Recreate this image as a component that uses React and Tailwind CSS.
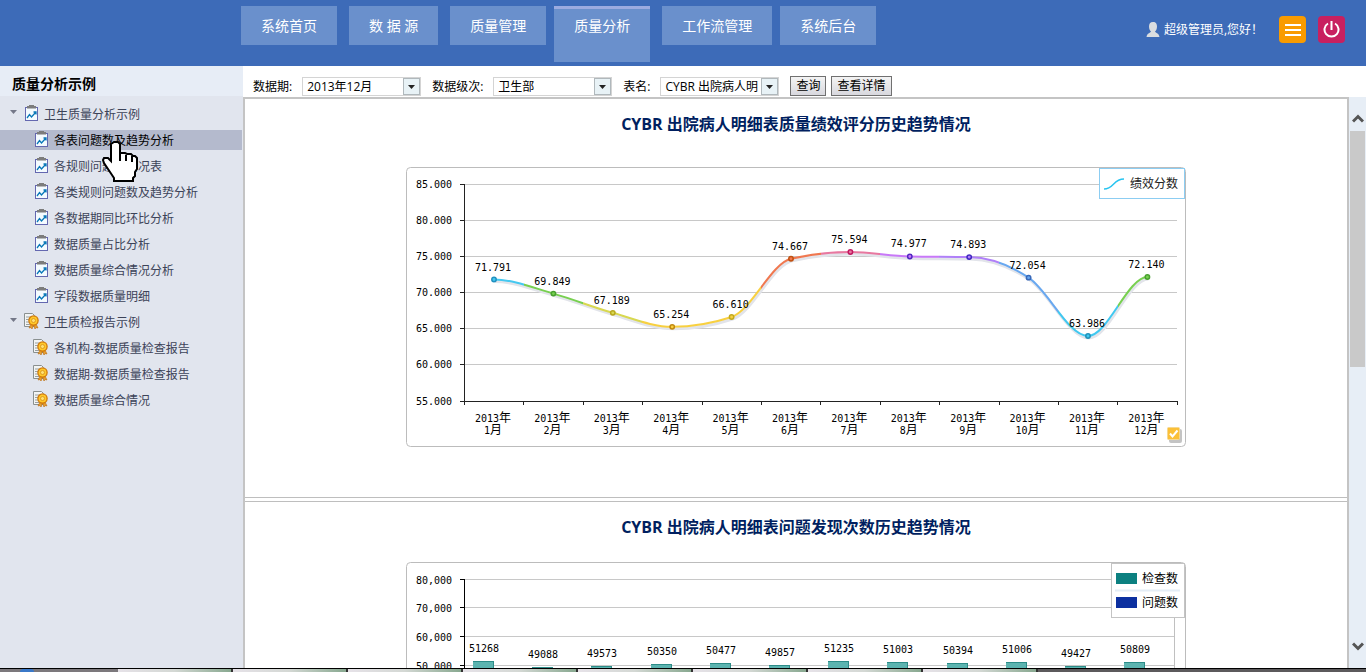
import React, { useState } from 'react';

const navItems = [
  { name: '系统首页', gap: 'mr-3' },
  { name: '数 据 源', gap: 'mr-3' },
  { name: '质量管理', gap: 'mr-2' },
  { name: '质量分析', gap: 'mr-3' },
  { name: '工作流管理', gap: 'mr-2' },
  { name: '系统后台', gap: '' },
];

const tree = [
  {
    name: '卫生质量分析示例',
    type: 'chart',
    children: [
      '各表问题数及趋势分析',
      '各规则问题数情况表',
      '各类规则问题数及趋势分析',
      '各数据期同比环比分析',
      '数据质量占比分析',
      '数据质量综合情况分析',
      '字段数据质量明细',
    ],
  },
  {
    name: '卫生质检报告示例',
    type: 'report',
    children: ['各机构-数据质量检查报告', '数据期-数据质量检查报告', '数据质量综合情况'],
  },
];

const scores = [
  { value: 71.791, line: '#45c8f0', dot: '#2090c0' },
  { value: 69.849, line: '#78d050', dot: '#48a030' },
  { value: 67.189, line: '#d8d850', dot: '#b8a820' },
  { value: 65.254, line: '#f8d040', dot: '#c08810' },
  { value: 66.61, line: '#f8d040', dot: '#c0a820' },
  { value: 74.667, line: '#f07850', dot: '#c05010' },
  { value: 75.594, line: '#e878a0', dot: '#c01860' },
  { value: 74.977, line: '#c878f8', dot: '#5028c0' },
  { value: 74.893, line: '#b080f8', dot: '#4028c0' },
  { value: 72.054, line: '#68a8f0', dot: '#3868b8' },
  { value: 63.986, line: '#40c8f0', dot: '#2090b8' },
  { value: 72.14, line: '#78d050', dot: '#48a030' },
];

const checks = [51268, 49088, 49573, 50350, 50477, 49857, 51235, 51003, 50394, 51006, 49427, 50809];

const ChartIcon = () => (
  <svg width="15" height="16" viewBox="0 0 15 16" className="mb-0.5 shrink-0">
    <rect x="1.5" y="2.5" width="12" height="13" fill="#f4fbff" stroke="#6468b0" />
    <path d="M3 3.500V1h2V0h5v1h2v2.500z" fill="#7c7c7c" />
    <path d="M3 13l2.500-3.500 2 2.500 4-4.500M9.500 7h2.500v2.500" fill="none" stroke="#0878b8" strokeWidth="1.300" />
  </svg>
);

const ReportIcon = () => (
  <svg width="15" height="16" viewBox="0 0 15 16" className="mb-0.5 shrink-0">
    <path d="M0.500 0.500h8l2 2v11h-10z" fill="#f2f4f4" stroke="#8a9090" />
    <path d="M2 4h5M2 6.500h3M2 9h3M2 11.500h4" stroke="#9aa0a0" />
    <path d="M7 11l-2 4 2-0.500 1 1.500 1.500-4 1.500 4 1-1.500 2 0.500-2-4z" fill="#e8a030" stroke="#b86808" strokeWidth="0.600" />
    <circle cx="9.500" cy="7.500" r="4.600" fill="#ffc828" stroke="#d07808" strokeWidth="1.300" />
    <circle cx="9.500" cy="7.500" r="2" fill="#ffe070" stroke="#d89018" strokeWidth="0.800" />
  </svg>
);

const Header = ({ active, setActive }) => (
  <header className="flex h-[66px] shrink-0 items-start bg-[#3d6bb8] text-white">
    <nav className="ml-[241px] flex items-start pt-1.5">
      {navItems.map((item) => (
        <a
          key={item.name}
          href="#"
          onClick={() => setActive(item.name)}
          className={`${item.gap} bg-[#6a90cc] px-5 text-sm whitespace-nowrap ${
            active === item.name
              ? 'h-14 border-t-3 border-[#9cabe0] leading-[33px]'
              : 'h-[39px] leading-[39px]'
          }`}
        >
          {item.name}
        </a>
      ))}
    </nav>
    <div className="ml-auto flex items-center pt-4 pr-[21px]">
      <svg width="14" height="16" viewBox="0 0 14 16">
        <path d="M7 0c3 0 4 2 4 4.500S10 9 9 9.500c0 1 4 1.500 4.500 5.500h-13C1 11 5 10.500 5 9.500 4 9 3 7 3 4.500S4 0 7 0z" fill="#dadde0" />
      </svg>
      <span className="ml-1 text-xs leading-5">超级管理员,您好！</span>
      <button aria-label="菜单" className="ml-4 flex h-[27px] w-[27px] items-center justify-center rounded bg-[#f99b00]">
        <svg width="16" height="14" viewBox="0 0 16 14">
          <path d="M0 2h16M0 7h16M0 12h16" stroke="#fff" strokeWidth="2" />
        </svg>
      </button>
      <button aria-label="退出" className="ml-3 flex h-[27px] w-[27px] items-center justify-center rounded bg-[#c82060]">
        <svg width="17" height="17" viewBox="0 0 17 17" fill="none" stroke="#fff" strokeWidth="2">
          <path d="M5 2.500a7 7 0 1 0 7 0M8.500 0v9" />
        </svg>
      </button>
    </div>
  </header>
);

const TreeItem = ({ name, type, selected, onClick }) => (
  <a
    href="#"
    onClick={onClick}
    className={`mr-px flex h-5 items-center gap-1 text-xs ${type === 'chart' ? 'pl-[34px]' : 'pl-[33px]'} ${
      selected ? 'bg-[#b4bacd] text-black' : 'text-[#3c4358]'
    }`}
  >
    {type === 'chart' ? <ChartIcon /> : <ReportIcon />}
    <span className={`pt-0.5 leading-5 ${type === 'chart' ? 'ml-px' : 'ml-0.5'}`}>{name}</span>
  </a>
);

const HandCursor = () => (
  <svg className="pointer-events-none absolute top-[75px] left-[102px]" width="36" height="42" viewBox="0 0 36 42">
    <path
      d="M12 1h4l2 2v9h5l2 1h4l2 2h2l2 2v11l-2 3v4l-2 2v3H12v-3l-2-3-4-6-4-6-1-3 1-2h4l3 3V3z"
      fill="#fff"
      stroke="#000"
      strokeWidth="2"
    />
    <path d="M18 12v8M24 14v6M30 15v6" stroke="#000" strokeWidth="2" />
  </svg>
);

const Sidebar = () => {
  const [selected, setSelected] = useState('各表问题数及趋势分析');

  return (
    <aside className="relative w-[243px] shrink-0 bg-[#e1e5ee]">
      <h2 className="h-[30px] bg-[#e7edf6] pl-3 text-sm leading-[36px] font-bold text-black">质量分析示例</h2>
      <div className="flex flex-col gap-1.5 pt-2">
        {tree.map((group) => (
          <React.Fragment key={group.name}>
            <div className="flex h-5 items-center pl-2.5 text-xs text-[#3c4358]">
              <svg width="7" height="4" viewBox="0 0 7 4" className="mb-1">
                <path d="M0 0h7L3.500 4z" fill="#747888" />
              </svg>
              <span className="mr-1 ml-[7px]">{group.type === 'chart' ? <ChartIcon /> : <ReportIcon />}</span>
              <span className="ml-px pt-0.5 leading-5">{group.name}</span>
            </div>
            {group.children.map((child) => (
              <TreeItem
                key={child}
                name={child}
                type={group.type}
                selected={selected === child}
                onClick={() => setSelected(child)}
              />
            ))}
          </React.Fragment>
        ))}
      </div>
      <HandCursor />
    </aside>
  );
};

const Filter = ({ id, label, value }) => (
  <div className="flex items-center gap-2.5">
    <label htmlFor={id}>{label}</label>
    <div className="relative">
      <select id={id} className="h-[19px] w-[119px] appearance-none border border-[#d4d4d4] bg-white pr-5 pl-1 text-xs leading-4">
        <option>{value}</option>
      </select>
      <span className="pointer-events-none absolute top-px right-px flex h-[17px] w-[17px] items-center justify-center border border-[#b0b8bc] bg-[#e8f2f6]">
        <svg width="7" height="4" viewBox="0 0 7 4">
          <path d="M0 0h7L3.500 4z" fill="#222" />
        </svg>
      </span>
    </div>
  </div>
);

const Toolbar = () => (
  <div className="flex h-[31px] shrink-0 items-end gap-[11px] pb-px pl-2.5 text-xs text-black">
    <Filter id="period" label="数据期:" value="2013年12月" />
    <Filter id="level" label="数据级次:" value="卫生部" />
    <Filter id="table" label="表名:" value="CYBR 出院病人明" />
    <div className="flex gap-[5px]">
      {['查询', '查看详情'].map((name) => (
        <button key={name} className="h-5 border border-[#707070] bg-linear-to-b from-[#f4f4f4] to-[#d8d8de] px-[5px] leading-[18px]">
          {name}
        </button>
      ))}
    </div>
  </div>
);

// monotone cubic through all points, flat at both ends
const smoothPath = (pts) => {
  const n = pts.length;
  const slope = (i) => (pts[i + 1].y - pts[i].y) / (pts[i + 1].x - pts[i].x);
  const m = pts.map((p, i) => {
    if (i === 0 || i === n - 1) return 0;
    const a = slope(i - 1);
    const b = slope(i);
    return (Math.sign(a) + Math.sign(b)) * Math.min(Math.abs(a), Math.abs(b), Math.abs(a + b) / 4);
  });
  let d = `M${pts[0].x} ${pts[0].y}`;
  for (let i = 1; i < n; i++) {
    const h = (pts[i].x - pts[i - 1].x) / 3;
    d += `C${pts[i - 1].x + h} ${pts[i - 1].y + m[i - 1] * h} ${pts[i].x - h} ${pts[i].y - m[i] * h} ${pts[i].x} ${pts[i].y}`;
  }
  return d;
};

const mono = 'font-["DejaVu_Sans_Mono","Noto_Sans_CJK_SC",monospace] text-[10px]';

const ScoreChart = () => {
  const step = 59.4;
  const points = scores.map((s, i) => ({ ...s, x: 88 + i * step, y: 234 - ((s.value - 55) / 30) * 217 }));
  const path = smoothPath(points);

  return (
    <svg width="780" height="280" viewBox="0 0 780 280" className={`mx-auto block ${mono}`}>
      <defs>
        <linearGradient id="score" gradientUnits="userSpaceOnUse" x1="58.3" y1="0" x2="771.1" y2="0">
          {points.map((p, i) => (
            <React.Fragment key={i}>
              <stop offset={i / 12} stopColor={p.line} />
              <stop offset={(i + 1) / 12} stopColor={p.line} />
            </React.Fragment>
          ))}
        </linearGradient>
      </defs>
      <rect x="0.5" y="0.5" width="779" height="279" rx="4" fill="#fff" stroke="#bcbcbc" />
      {[85, 80, 75, 70, 65, 60, 55].map((v, i) => {
        const y = Math.floor(17 + i * 36.17) + 0.5;
        return (
          <g key={v}>
            {v !== 55 && <path d={`M58 ${y}H771`} stroke="#c8c8c8" />}
            <path d={`M54 ${y}H58`} stroke="#222" />
            <text x="46" y={y + 3} textAnchor="end">{v.toFixed(3)}</text>
          </g>
        );
      })}
      <path d="M58.5 17V234.5H771.5" fill="none" stroke="#222" />
      <path d={path} transform="translate(1 2)" fill="none" stroke="#e2e4ea" strokeWidth="3" />
      <path d={path} fill="none" stroke="url(#score)" strokeWidth="2" />
      {Array.from({ length: 13 }, (_, i) => (
        <path key={i} d={`M${Math.round(58 + i * step) + 0.5} 234v4`} stroke="#222" />
      ))}
      {points.map((p, i) => (
        <g key={i}>
          <circle cx={p.x} cy={p.y} r="2.2" fill={p.line} stroke={p.dot} strokeWidth="1.5" />
          <text x={p.x - 1} y={p.y - 9} textAnchor="middle">{p.value.toFixed(3)}</text>
          <text x={p.x - 1} y="255" textAnchor="middle">
            2013<tspan className="text-xs">年</tspan>
          </text>
          <text x={p.x - 1} y="267" textAnchor="middle">
            {i + 1}<tspan className="text-xs">月</tspan>
          </text>
        </g>
      ))}
      <rect x="693.5" y="1.5" width="85" height="30" fill="#fff" stroke="#8ccdf2" />
      <path d="M698 22c10 0 9-10 20-10" fill="none" stroke="#28c4f0" strokeWidth="1.5" />
      <text x="724" y="21" className="text-xs" fill="#222">绩效分数</text>
      <rect x="763" y="262" width="13" height="14" rx="2" fill="#c4c4c4" />
      <rect x="761.5" y="260.5" width="12" height="12" rx="1" fill="#fbc038" stroke="#f6d890" />
      <path d="M764 266.500l2.500 3 5-6" fill="none" stroke="#fff" strokeWidth="2" />
    </svg>
  );
};

const CheckChart = () => {
  const toY = (v) => Math.floor(17 + ((80000 - v) / 10000) * 28.7);

  return (
    <svg width="780" height="280" viewBox="0 0 780 280" className={`mx-auto block ${mono}`}>
      <rect x="0.5" y="0.5" width="779" height="279" rx="4" fill="#fff" stroke="#bcbcbc" />
      {[80, 70, 60, 50, 40, 30, 20, 10, 0].map((v) => {
        const y = toY(v * 1000) + 0.5;
        return (
          <g key={v}>
            <path d={`M58 ${y}H768`} stroke="#c8c8c8" />
            <path d={`M54 ${y}H58`} stroke="#000" />
            <text x="46" y={y + 4} textAnchor="end">{v ? `${v},000` : '0'}</text>
          </g>
        );
      })}
      <path d="M58.5 17V247" stroke="#000" />
      <path d="M768.5 17V247" stroke="#c0c0c0" />
      {checks.map((v, i) => {
        const x = Math.round(67 + i * 59.2);
        const y = toY(v);
        return (
          <g key={i}>
            <rect x={x} y={y} width="21" height={247 - y} fill="#5cb4b0" />
            <path d={`M${x} ${y + 0.5}h21`} stroke="#2c8c88" />
            <path d={`M${x + 20.5} ${y}V247`} stroke="#2c8c88" />
            <text x={x + 11} y={y - 9} textAnchor="middle">{v}</text>
          </g>
        );
      })}
      <rect x="705.5" y="1.5" width="73" height="54" fill="#fff" stroke="#c4c4c4" />
      <rect x="710" y="11" width="21" height="11" fill="#0c8080" />
      <path d="M709 28.500h65" stroke="#e4edf6" strokeWidth="2" />
      <rect x="710" y="35" width="21" height="11" fill="#0c30a0" />
      <text x="736" y="21" className="text-xs">检查数</text>
      <text x="736" y="45" className="text-xs">问题数</text>
    </svg>
  );
};

const Scrollbar = () => (
  <div className="flex w-[17px] shrink-0 flex-col items-center bg-[#e7eef6]">
    <div className="flex h-[34px] items-center pt-2">
      <svg width="12" height="9" viewBox="0 0 12 9">
        <path d="M1 7.500l5-5 5 5" fill="none" stroke="#555" strokeWidth="3" />
      </svg>
    </div>
    <div className="h-[236px] w-[15px] bg-[#c9c9c9]" />
    <div className="mt-auto pb-[17px]">
      <svg width="12" height="9" viewBox="0 0 12 9">
        <path d="M1 1.500l5 5 5-5" fill="none" stroke="#555" strokeWidth="3" />
      </svg>
    </div>
  </div>
);

const Taskbar = () => (
  <footer className="flex h-1 shrink-0 border-t border-black bg-[#5c5a5c]">
    <div className="w-[118px] bg-[#7c787c]">
      <div className="ml-5 h-full w-3.5 rounded-t-full bg-[#3a78c8]" />
    </div>
    {Array.from({ length: 8 }, (_, i) => (
      <div key={i} className="w-[115px] border-r-2 border-[#333] bg-linear-to-r from-[#e6e2e8] via-[#d4d8d4] to-[#88a890]" />
    ))}
  </footer>
);

const App = () => {
  const [active, setActive] = useState('质量分析');

  return (
    <div className='flex h-screen flex-col overflow-hidden bg-white font-["Open_Sans","Noto_Sans_CJK_SC",sans-serif]'>
      <Header active={active} setActive={setActive} />
      <div className="flex min-h-0 flex-1">
        <Sidebar />
        <main className="flex min-w-0 flex-1 flex-col">
          <Toolbar />
          <div className="flex min-h-0 flex-1">
            <div className="flex min-w-0 flex-1 flex-col gap-[3px] overflow-hidden border-x-2 border-t-2 border-[#c4c4c4]">
              <section className="shrink-0 border-b border-[#bebebe] pt-[15px] pb-[50px]">
                <h1 className="mb-[33px] text-center text-base leading-5 font-bold text-[#001f60]">
                  CYBR 出院病人明细表质量绩效评分历史趋势情况
                </h1>
                <ScoreChart />
              </section>
              <section className="shrink-0 border-t border-[#bebebe] pt-[15px]">
                <h1 className="mb-[25px] text-center text-base leading-5 font-bold text-[#001f60]">
                  CYBR 出院病人明细表问题发现次数历史趋势情况
                </h1>
                <CheckChart />
              </section>
            </div>
            <Scrollbar />
          </div>
        </main>
      </div>
      <Taskbar />
    </div>
  );
};

export default App;
